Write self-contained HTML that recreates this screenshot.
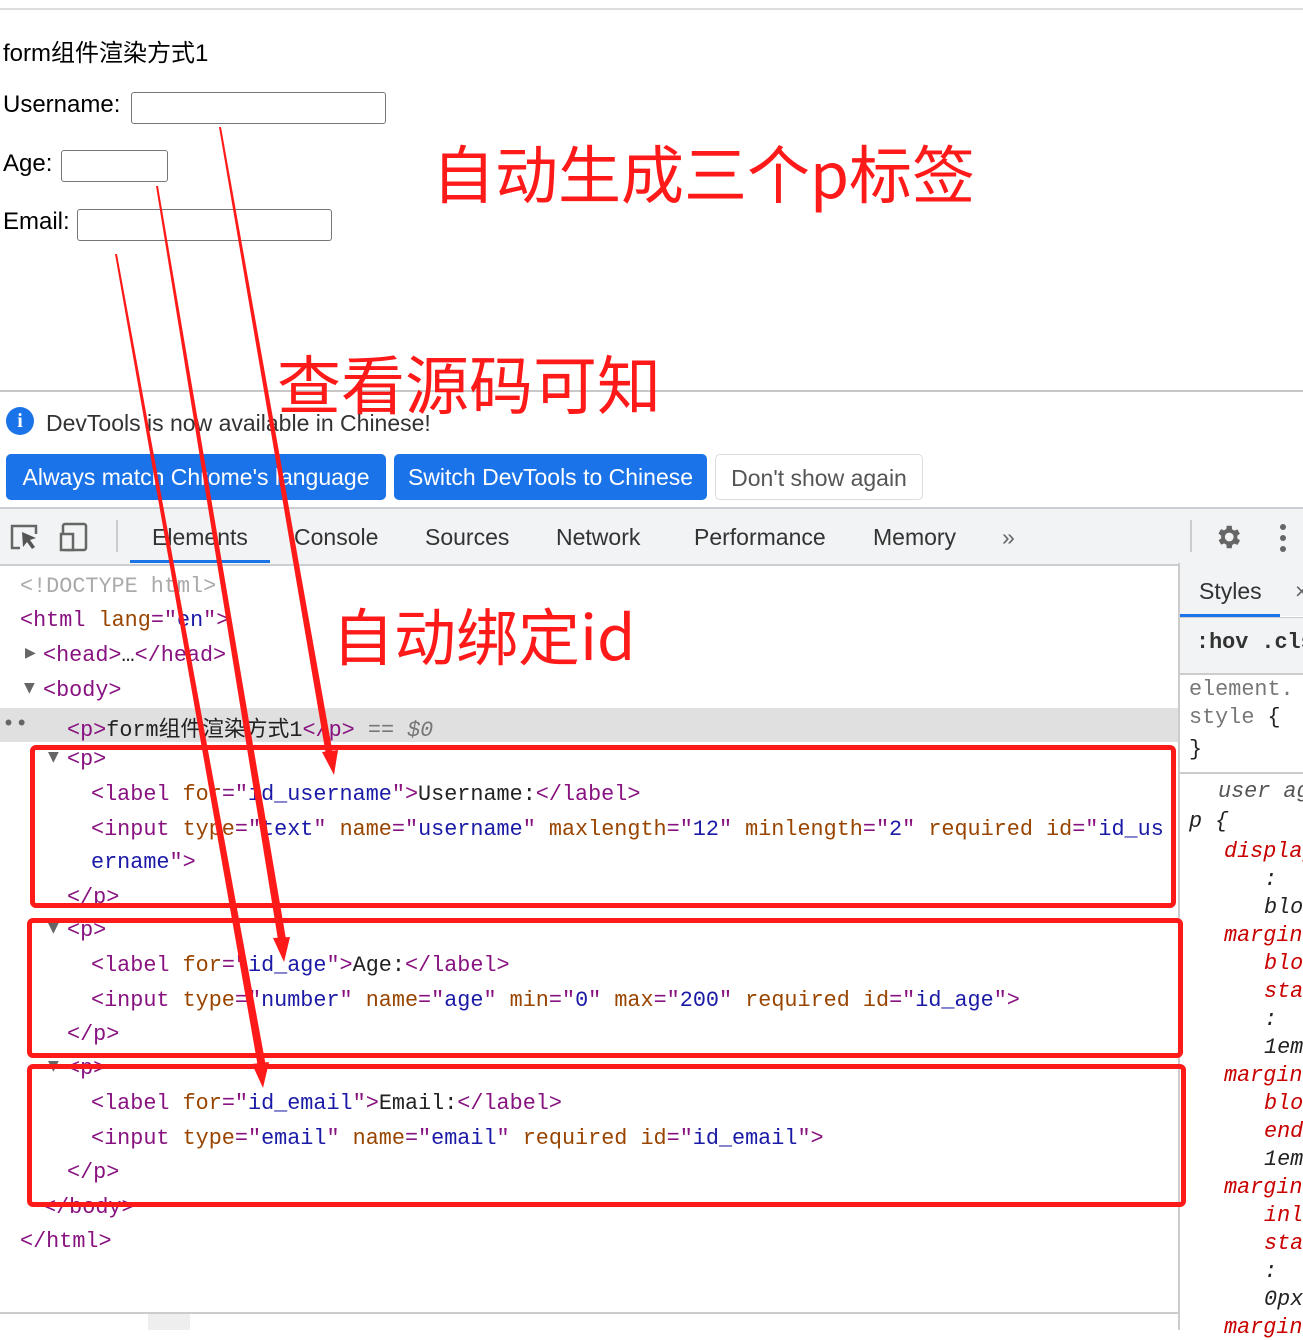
<!DOCTYPE html>
<html><head><meta charset="utf-8">
<style>
body{margin:0;width:1303px;height:1330px;overflow:hidden;background:#fff;position:relative;font-family:"Liberation Sans","Noto Sans CJK SC",sans-serif}
.a{position:absolute;white-space:nowrap}
.inp{position:absolute;border:1px solid #767676;border-radius:3px;height:30px;background:#fff}
.code{font-family:"Liberation Mono","DejaVu Sans Mono","Noto Sans CJK SC",monospace;font-size:21.8px;position:absolute;white-space:nowrap;color:#222}
.t{color:#881280}.n{color:#994500}.v{color:#1a1aa6}
.tri{position:absolute;font-size:14px;color:#666;font-family:"DejaVu Sans",sans-serif}
.btn{position:absolute;top:454px;height:46px;border-radius:5px;background:#1a73e8;color:#fff;font-size:23px;line-height:46px;text-align:center}
.tab{position:absolute;top:524px;font-size:23px;color:#333}
.red{color:#ff1a1a;font-family:"Noto Sans CJK SC",sans-serif;position:absolute;white-space:nowrap;line-height:1}
.box{position:absolute;border:5px solid #ff1a1a;border-radius:6px}
</style></head><body>
<div style="position:absolute;left:0;top:8px;width:1303px;height:2px;background:#ddd"></div>
<div class="a" style="left:3px;top:33px;font-size:24px">form组件渲染方式1</div>
<div class="a" style="left:3px;top:91px;font-size:24px">Username:</div>
<div class="inp" style="left:131px;top:92px;width:253px"></div>
<div class="a" style="left:3px;top:150px;font-size:24px">Age:</div>
<div class="inp" style="left:61px;top:150px;width:105px"></div>
<div class="a" style="left:3px;top:208px;font-size:24px">Email:</div>
<div class="inp" style="left:77px;top:209px;width:253px"></div>
<div class="red" style="left:432px;top:140px;font-size:63px">自动生成三个p标签</div>

<div style="position:absolute;left:0;top:390px;width:1303px;height:2px;background:#c8c8c8"></div>
<div class="red" style="left:277px;top:350px;font-size:64px">查看源码可知</div>
<div style="position:absolute;left:6px;top:407px;width:28px;height:28px;border-radius:50%;background:#1a73e8;color:#fff;font:bold 20px 'Liberation Serif',serif;text-align:center;line-height:28px">i</div>
<div class="a" style="left:46px;top:410px;font-size:23px;color:#333">DevTools is now available in Chinese!</div>
<div class="btn" style="left:6px;width:380px">Always match Chrome's language</div>
<div class="btn" style="left:394px;width:313px">Switch DevTools to Chinese</div>
<div class="btn" style="left:715px;width:206px;background:#fff;color:#555;border:1px solid #dadce0;height:44px">Don't show again</div>
<div style="position:absolute;left:0;top:507px;width:1303px;height:55px;background:#f1f3f4;border-top:2px solid #cacdd1;border-bottom:2px solid #cacdd1"></div>
<svg class="a" style="left:8px;top:520px" width="90" height="34" viewBox="0 0 90 34"><path d="M12 28H4V6h24v8" fill="none" stroke="#666" stroke-width="2.5"/><path d="M14 12l14 6-6 2 5 7-3 2-5-7-4 5z" fill="#555"/><rect x="55" y="4" width="23" height="26" rx="2" fill="none" stroke="#666" stroke-width="2.5"/><rect x="53" y="14" width="12" height="16" fill="#f1f3f4" stroke="#666" stroke-width="2.5"/></svg>
<div style="position:absolute;left:116px;top:520px;width:2px;height:32px;background:#ccc"></div>
<div class="tab" style="left:152px">Elements</div>
<div style="position:absolute;left:130px;top:560px;width:140px;height:3px;background:#1a73e8"></div>
<div class="tab" style="left:294px">Console</div>
<div class="tab" style="left:425px">Sources</div>
<div class="tab" style="left:556px">Network</div>
<div class="tab" style="left:694px">Performance</div>
<div class="tab" style="left:873px">Memory</div>
<div class="tab" style="left:1002px;color:#666">»</div>
<div style="position:absolute;left:1190px;top:520px;width:2px;height:32px;background:#ccc"></div>
<svg class="a" style="left:1213px;top:522px" width="30" height="30" viewBox="0 0 24 24"><path fill="#666" d="M19.4 13a7.5 7.5 0 000-2l2.1-1.6-2-3.5-2.5 1a7 7 0 00-1.7-1L15 3h-4l-.4 2.7a7 7 0 00-1.7 1l-2.5-1-2 3.5L6.6 11a7.5 7.5 0 000 2l-2.1 1.6 2 3.5 2.5-1a7 7 0 001.7 1L11 21h4l.4-2.7a7 7 0 001.7-1l2.5 1 2-3.5zM13 15.5a3.5 3.5 0 110-7 3.5 3.5 0 010 7z"/></svg>
<div class="a" style="left:1280px;top:524px;width:6px"><div style="width:6px;height:6px;border-radius:50%;background:#666;margin-bottom:5px"></div><div style="width:6px;height:6px;border-radius:50%;background:#666;margin-bottom:5px"></div><div style="width:6px;height:6px;border-radius:50%;background:#666"></div></div>

<div style="position:absolute;left:0;top:708px;width:1178px;height:34px;background:#e0e0e0"></div>
<div class="code" style="left:20px;top:574px;color:#aaa">&lt;!DOCTYPE html&gt;</div>
<div class="code" style="left:20px;top:608px"><span class="t">&lt;html </span><span class="n">lang</span><span class="t">="</span><span class="v">en</span><span class="t">"&gt;</span></div>
<div class="tri" style="left:25px;top:645px">▶</div>
<div class="code" style="left:43px;top:643px"><span class="t">&lt;head&gt;</span>…<span class="t">&lt;/head&gt;</span></div>
<div class="tri" style="left:24px;top:680px">▼</div>
<div class="code" style="left:43px;top:678px"><span class="t">&lt;body&gt;</span></div>
<div class="code" style="left:2px;top:712px;color:#666">••</div>
<div class="code" style="left:67px;top:712px"><span class="t">&lt;p&gt;</span>form组件渲染方式1<span class="t">&lt;/p&gt;</span> <span style="color:#777;font-style:italic">== $0</span></div>
<div class="tri" style="left:48px;top:749px">▼</div>
<div class="code" style="left:67px;top:747px"><span class="t">&lt;p&gt;</span></div>
<div class="code" style="left:91px;top:782px"><span class="t">&lt;label </span><span class="n">for</span><span class="t">="</span><span class="v">id_username</span><span class="t">"&gt;</span>Username:<span class="t">&lt;/label&gt;</span></div>
<div class="code" style="left:91px;top:817px"><span class="t">&lt;input </span><span class="n">type</span><span class="t">="</span><span class="v">text</span><span class="t">" </span><span class="n">name</span><span class="t">="</span><span class="v">username</span><span class="t">" </span><span class="n">maxlength</span><span class="t">="</span><span class="v">12</span><span class="t">" </span><span class="n">minlength</span><span class="t">="</span><span class="v">2</span><span class="t">" </span><span class="n">required id</span><span class="t">="</span><span class="v">id_us</span></div>
<div class="code" style="left:91px;top:850px"><span class="v">ername</span><span class="t">"&gt;</span></div>
<div class="code" style="left:67px;top:885px"><span class="t">&lt;/p&gt;</span></div>
<div class="tri" style="left:48px;top:920px">▼</div>
<div class="code" style="left:67px;top:918px"><span class="t">&lt;p&gt;</span></div>
<div class="code" style="left:91px;top:953px"><span class="t">&lt;label </span><span class="n">for</span><span class="t">="</span><span class="v">id_age</span><span class="t">"&gt;</span>Age:<span class="t">&lt;/label&gt;</span></div>
<div class="code" style="left:91px;top:988px"><span class="t">&lt;input </span><span class="n">type</span><span class="t">="</span><span class="v">number</span><span class="t">" </span><span class="n">name</span><span class="t">="</span><span class="v">age</span><span class="t">" </span><span class="n">min</span><span class="t">="</span><span class="v">0</span><span class="t">" </span><span class="n">max</span><span class="t">="</span><span class="v">200</span><span class="t">" </span><span class="n">required id</span><span class="t">="</span><span class="v">id_age</span><span class="t">"&gt;</span></div>
<div class="code" style="left:67px;top:1022px"><span class="t">&lt;/p&gt;</span></div>
<div class="tri" style="left:48px;top:1058px">▼</div>
<div class="code" style="left:67px;top:1056px"><span class="t">&lt;p&gt;</span></div>
<div class="code" style="left:91px;top:1091px"><span class="t">&lt;label </span><span class="n">for</span><span class="t">="</span><span class="v">id_email</span><span class="t">"&gt;</span>Email:<span class="t">&lt;/label&gt;</span></div>
<div class="code" style="left:91px;top:1126px"><span class="t">&lt;input </span><span class="n">type</span><span class="t">="</span><span class="v">email</span><span class="t">" </span><span class="n">name</span><span class="t">="</span><span class="v">email</span><span class="t">" </span><span class="n">required id</span><span class="t">="</span><span class="v">id_email</span><span class="t">"&gt;</span></div>
<div class="code" style="left:67px;top:1160px"><span class="t">&lt;/p&gt;</span></div>
<div class="code" style="left:43px;top:1195px"><span class="t">&lt;/body&gt;</span></div>
<div class="code" style="left:20px;top:1229px"><span class="t">&lt;/html&gt;</span></div>
<div style="position:absolute;left:0;top:1312px;width:1178px;height:2px;background:#ccc"></div>
<div style="position:absolute;left:148px;top:1314px;width:42px;height:16px;background:#eee"></div>

<div style="position:absolute;left:1178px;top:563px;width:2px;height:767px;background:#ccc"></div>
<div style="position:absolute;left:1180px;top:563px;width:123px;height:53px;background:#f1f3f4"></div>
<div class="a" style="left:1199px;top:578px;font-size:23px;color:#333">Styles</div>
<div class="a" style="left:1295px;top:578px;font-size:23px;color:#666">×</div>
<div style="position:absolute;left:1180px;top:614px;width:100px;height:3px;background:#1a73e8"></div>
<div style="position:absolute;left:1180px;top:617px;width:123px;height:55px;background:#f1f3f4;border-top:1px solid #ccc;border-bottom:2px solid #ccc"></div>
<div class="code" style="left:1196px;top:630px;font-weight:bold;color:#333">:hov .cls</div>
<div class="code" style="left:1189px;top:677px;color:#777">element.</div>
<div class="code" style="left:1189px;top:705px;color:#777">style <span style="color:#222">{</span></div>
<div class="code" style="left:1189px;top:737px">}</div>
<div style="position:absolute;left:1180px;top:772px;width:123px;height:2px;background:#ccc"></div>
<div class="code" style="left:1218px;top:779px;color:#555;font-style:italic">user agent</div>
<div class="code" style="left:1189px;top:809px;font-style:italic">p {</div>
<div class="code" style="left:1224px;top:839px;color:#c80000;font-style:italic">display</div>
<div class="code" style="left:1264px;top:867px;font-style:italic">:</div>
<div class="code" style="left:1264px;top:895px;font-style:italic">block</div>
<div class="code" style="left:1224px;top:923px;color:#c80000;font-style:italic">margin-</div>
<div class="code" style="left:1264px;top:951px;color:#c80000;font-style:italic">block-</div>
<div class="code" style="left:1264px;top:979px;color:#c80000;font-style:italic">start</div>
<div class="code" style="left:1264px;top:1007px;font-style:italic">:</div>
<div class="code" style="left:1264px;top:1035px;font-style:italic">1em</div>
<div class="code" style="left:1224px;top:1063px;color:#c80000;font-style:italic">margin-</div>
<div class="code" style="left:1264px;top:1091px;color:#c80000;font-style:italic">block-</div>
<div class="code" style="left:1264px;top:1119px;color:#c80000;font-style:italic">end:</div>
<div class="code" style="left:1264px;top:1147px;font-style:italic">1em</div>
<div class="code" style="left:1224px;top:1175px;color:#c80000;font-style:italic">margin-</div>
<div class="code" style="left:1264px;top:1203px;color:#c80000;font-style:italic">inline-</div>
<div class="code" style="left:1264px;top:1231px;color:#c80000;font-style:italic">start</div>
<div class="code" style="left:1264px;top:1259px;font-style:italic">:</div>
<div class="code" style="left:1264px;top:1287px;font-style:italic">0px</div>
<div class="code" style="left:1224px;top:1315px;color:#c80000;font-style:italic">margin-</div>

<div class="red" style="left:332px;top:602px;font-size:62px">自动绑定id</div>
<div class="box" style="left:30px;top:745px;width:1136px;height:153px"></div>
<div class="box" style="left:27px;top:918px;width:1146px;height:130px"></div>
<div class="box" style="left:27px;top:1064px;width:1149px;height:133px"></div>
<svg class="a" style="left:0;top:0" width="1303" height="1330">
<g fill="#ff1a1a">
<polygon points="219,127 221,127 334,760 327,761"/>
<polygon points="334,775 322,752 338,750"/>
<polygon points="156,186 158,186 287,945 279,946"/>
<polygon points="284,962 273,938 290,937"/>
<polygon points="115,254 117,254 267,1072 259,1073"/>
<polygon points="263,1088 252,1064 269,1062"/>
</g>
</svg>
</body></html>
